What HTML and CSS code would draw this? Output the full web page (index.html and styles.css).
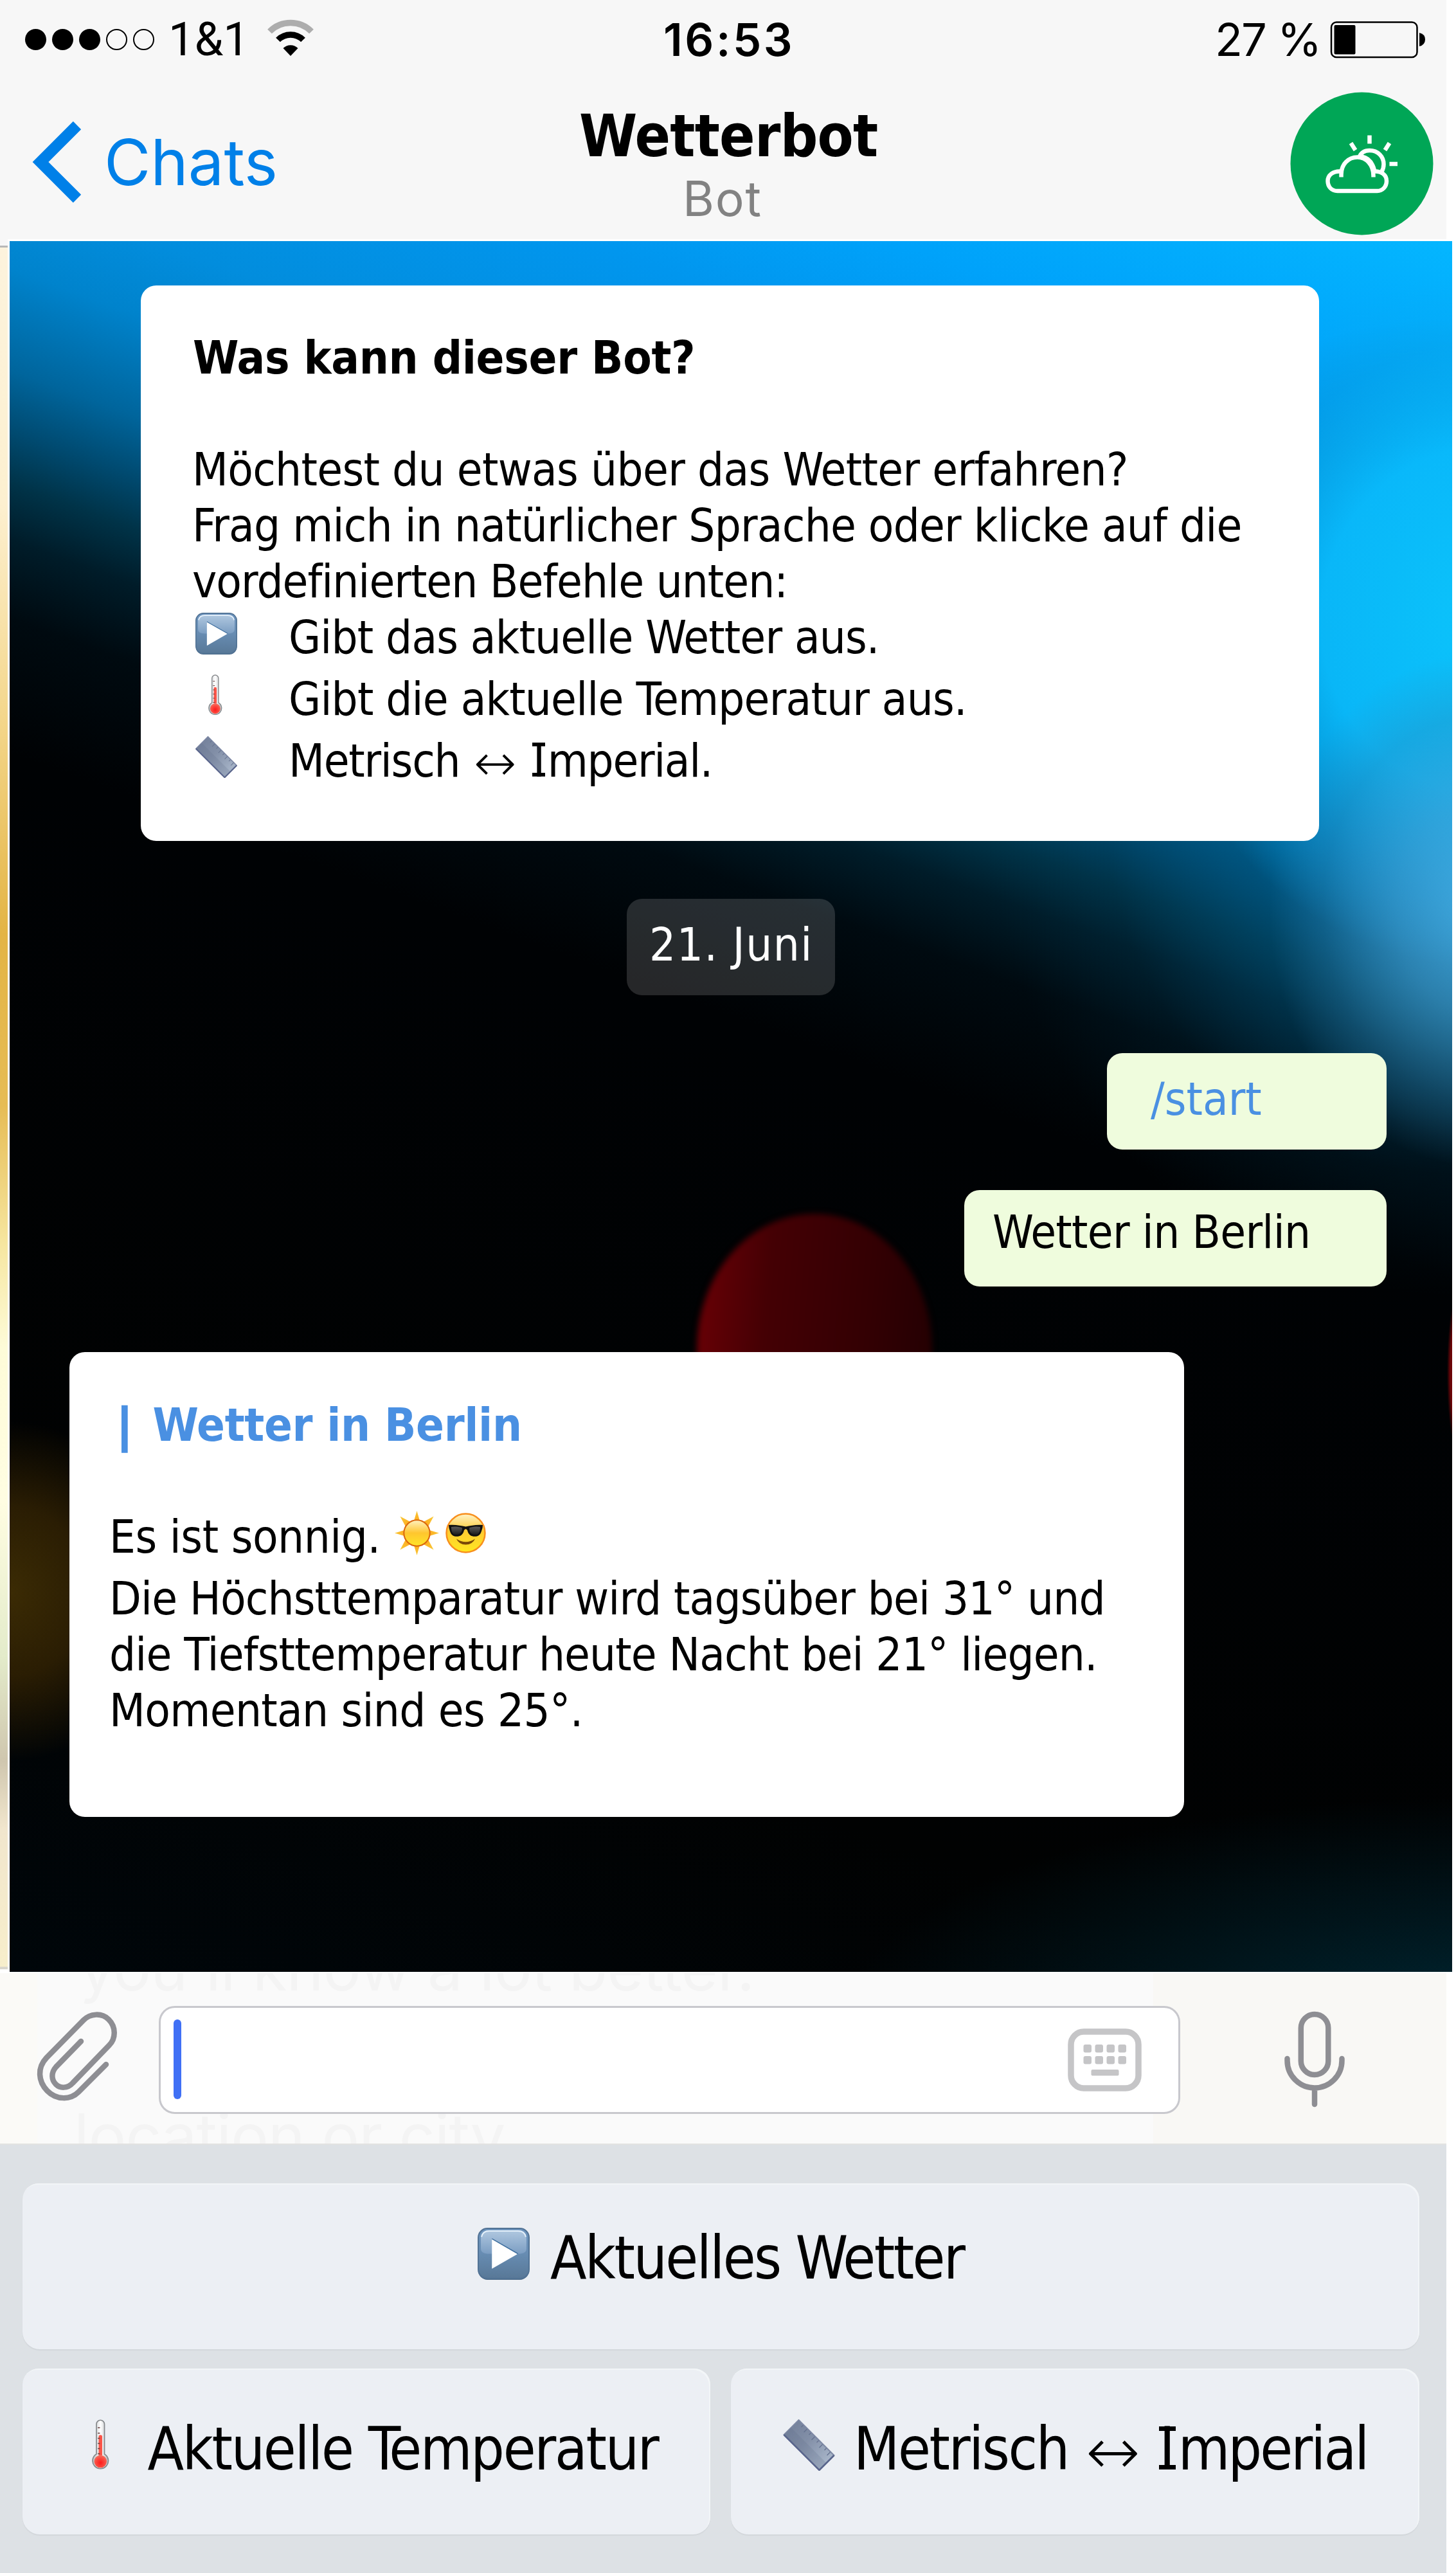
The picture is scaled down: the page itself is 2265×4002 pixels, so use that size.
FILE: index.html
```html
<!DOCTYPE html>
<html lang="de">
<head>
<meta charset="utf-8">
<title>Wetterbot</title>
<link rel="stylesheet" href="styles.css">
</head>
<body>
<svg class="sprite" width="0" height="0" aria-hidden="true">
  <defs>
    <linearGradient id="playBody" x1="0" y1="0" x2="0" y2="1"><stop offset="0" stop-color="#6f96bf"/><stop offset=".5" stop-color="#678cb2"/><stop offset="1" stop-color="#587897"/></linearGradient>
    <linearGradient id="playGloss" x1="0" y1="0" x2="0" y2="1"><stop offset="0" stop-color="#b0c8e0"/><stop offset="1" stop-color="#7b9dc2"/></linearGradient>
    <linearGradient id="rulerBody" x1="0" y1="0" x2="1" y2="1"><stop offset="0" stop-color="#6f7c97"/><stop offset=".45" stop-color="#8390a8"/><stop offset="1" stop-color="#b4c2d4"/></linearGradient>
    <linearGradient id="tube" x1="0" y1="0" x2="1" y2="0"><stop offset="0" stop-color="#b9bdc0"/><stop offset=".5" stop-color="#ffffff"/><stop offset="1" stop-color="#b5b9bc"/></linearGradient>
    <radialGradient id="bulb" cx=".5" cy=".6" r=".6"><stop offset="0" stop-color="#ff1a1a"/><stop offset=".6" stop-color="#fb4a40"/><stop offset="1" stop-color="#f4705f"/></radialGradient>
    <linearGradient id="sunBody" x1="0" y1="0" x2="0" y2="1"><stop offset="0" stop-color="#fff1c0"/><stop offset=".5" stop-color="#ffc62e"/><stop offset="1" stop-color="#ffe528"/></linearGradient>
    <radialGradient id="ray" gradientUnits="userSpaceOnUse" cx="35" cy="35" r="35"><stop offset=".5" stop-color="#ffa91c"/><stop offset="1" stop-color="#f8c838"/></radialGradient>
    <linearGradient id="faceBody" x1="0" y1="0" x2="0" y2="1"><stop offset="0" stop-color="#fff3c8"/><stop offset=".45" stop-color="#ffcb33"/><stop offset="1" stop-color="#ffe81f"/></linearGradient>
    <linearGradient id="lens" x1="0" y1="0" x2="0" y2="1"><stop offset="0" stop-color="#5a5a5a"/><stop offset="1" stop-color="#1c1c1c"/></linearGradient>
    <symbol id="play" viewBox="0 0 80 81">
      <rect x="1" y="2" width="78" height="78" rx="14" fill="#4a6987"/>
      <rect x="1" y="1" width="78" height="77" rx="14" fill="url(#playBody)" stroke="#527395" stroke-width="2"/>
      <path d="M5 17Q5 4 18 4H62Q75 4 75 17V32Q75 40 62 40H18Q5 40 5 32Z" fill="url(#playGloss)"/>
      <path d="M6 14Q8 5 18 5H62Q72 5 74 14" fill="none" stroke="#e6f1fb" stroke-width="2"/>
      <path d="M22 17L62 40L22 63Z" fill="#fff"/>
      <path d="M22 17L62 40" stroke="#3f6f9f" stroke-width="1.5"/>
    </symbol>
    <symbol id="thermo" viewBox="0 0 27 80">
      <path d="M7 54V7.5A6.2 6.2 0 0 1 19.500 7.500V54A12.200 12.200 0 1 1 7 54Z" fill="url(#tube)" stroke="#85888b" stroke-width="1.700"/>
      <path d="M10.500 56V27A2.700 2.700 0 0 1 16 27V56Z" fill="#fb5448"/>
      <circle cx="13.300" cy="65.500" r="9.800" fill="url(#bulb)"/>
      <path d="M9 13H12.500M9 21.500H12.500M9 29.500H12.500M9 37.500H12.500M9 45.500H12.500M9 53.500H12.500" stroke="#6b4444" stroke-width="1.300"/>
    </symbol>
    <symbol id="ruler" viewBox="0 0 80 80">
      <path d="M24 1L79 56L56 79L1 24Z" fill="url(#rulerBody)" stroke="#7d88a4" stroke-width="2"/>
      <path d="M12 13L67 68L56 79L1 24Z" fill="#5f6d8a" opacity=".22"/>
      <path d="M1 24L56 79L79 56" fill="none" stroke="#59658c" stroke-width="2.500"/>
      <path d="M31 9L28 12M37 15L32 20M43 21L40 24M49 27L44 32M55 33L52 36M61 39L56 44M67 45L64 48M73 51L68 56" stroke="#66728f" stroke-width="1.300"/>
    </symbol>
    <symbol id="sun" viewBox="0 0 70 70">
      <path d="M35 0L40 17H30ZM35 70L40 53H30ZM0 35L17 30V40ZM70 35L53 30V40ZM8.500 8.500L26 18L18 26ZM61.500 8.500L52 26L44 18ZM8.500 61.500L18 44L26 52ZM61.500 61.500L44 52L52 44Z" fill="url(#ray)"/>
      <circle cx="35" cy="35" r="20.500" fill="url(#sunBody)" stroke="#d9650c" stroke-width="2"/>
    </symbol>
    <symbol id="cool" viewBox="0 0 63 63">
      <circle cx="31.500" cy="31.500" r="30" fill="url(#faceBody)" stroke="#f88f1d" stroke-width="2.500"/>
      <path d="M5 19C15 18 24 20 31.500 21.500C39 20 48 18 58 19L57.500 24C56.500 25 56 35 49 36.500C42 37.500 36 36 34 27Q31.500 23.500 29 27C27 36 21 37.500 14 36.500C7 35 6.500 25 5.500 24Z" fill="#111"/>
      <path d="M9 22C16 20.500 23 22 26 23.500C26 31 22 34.500 15 34C10.500 33 9 28 9 22ZM54 22C47 20.500 40 22 37 23.500C37 31 41 34.500 48 34C52.500 33 54 28 54 22Z" fill="url(#lens)"/>
      <path d="M17 40.500Q31.500 50 46 40.500Q42 49.500 31.500 49.500Q21 49.500 17 40.500Z" fill="#7a4a08"/>
    </symbol>
  </defs>
</svg>

<div class="screen">
  <header class="header">
    <div class="status">
      <svg class="dots" width="206" height="40" viewBox="36 41 206 40">
        <g fill="#000"><circle cx="55.500" cy="61.500" r="16.500"/><circle cx="97.500" cy="61.500" r="16.500"/><circle cx="139.500" cy="61.500" r="16.500"/></g>
        <g fill="none" stroke="#000" stroke-width="2"><circle cx="181.500" cy="61.500" r="15.500"/><circle cx="223.500" cy="61.500" r="15.500"/></g>
      </svg>
      <span class="carrier">1&amp;1</span>
      <svg class="wifi" width="74" height="56" viewBox="415 32 74 56">
        <path d="M452 87L440.500 75A16.500 16.500 0 0 1 463.500 75Z" fill="#000"/>
        <path d="M432.500 62A27.500 27.500 0 0 1 471.500 62" fill="none" stroke="#000" stroke-width="9.500"/>
        <path d="M419.500 49A46 46 0 0 1 484.500 49" fill="none" stroke="#adadad" stroke-width="9.500"/>
      </svg>
      <span class="clock">16:53</span>
      <span class="percent">27 %</span>
      <svg class="battery" width="150" height="58" viewBox="2069 33 150 58">
        <rect x="2071" y="34.500" width="133.500" height="54.500" rx="8" fill="none" stroke="#000" stroke-width="2.500"/>
        <rect x="2075.500" y="39" width="33" height="45.500" rx="2" fill="#000"/>
        <path d="M2208 51Q2217 53 2217 61.500Q2217 70 2208 72Z" fill="#000"/>
      </svg>
    </div>
    <div class="nav">
      <a class="back">
        <svg width="78" height="128" viewBox="49 188 78 128"><path d="M120 195L63 252L120 309" fill="none" stroke="#0080e8" stroke-width="17.500"/></svg>
        <span class="back-label">Chats</span>
      </a>
      <div class="title">
        <div class="title-name">Wetterbot</div>
        <div class="title-sub">Bot</div>
      </div>
      <svg class="avatar" width="223" height="223" viewBox="2006.500 143.500 223 223">
        <circle cx="2118" cy="255" r="111" fill="#00a656"/>
        <g fill="none" stroke="#fff" stroke-width="6.500">
          <path d="M2086 276V272C2086 256 2097 245 2111 245C2125 245 2136 257 2136 274V276"/>
          <path d="M2086 267C2073 266 2065 273 2065 282C2065 291 2071 297.500 2080 297.500H2142C2150 297.500 2156.500 291 2156.500 282C2156.500 273 2149 266 2136 267"/>
          <path d="M2114 245C2117 237 2123 234.500 2130 234.500C2143 234.500 2152 244 2152 256C2152 260 2151 264 2149 267M2118 244C2129 246 2135 254 2138 267"/>
          <path d="M2130 211V224M2101 223L2108 234M2161 223L2154 234M2161 255.500H2173.500"/>
        </g>
      </svg>
    </div>
  </header>

  <main class="chat-row">
    <div class="edge"></div>
    <section class="chat">
      <div class="glow glow-red"></div>
      <div class="card intro">
        <div class="line bold ls-was">Was kann dieser Bot?</div>
        <div class="line blank"></div>
        <div class="line ls-moe">Möchtest du etwas über das Wetter erfahren?</div>
        <div class="line ls-frag">Frag mich in natürlicher Sprache oder klicke auf die</div>
        <div class="line ls-vor">vordefinierten Befehle unten:</div>
        <div class="line cmd"><svg class="i-play"><use href="#play"/></svg><span class="ls-gibt">Gibt das aktuelle Wetter aus.</span></div>
        <div class="line cmd tall"><svg class="i-thermo"><use href="#thermo"/></svg><span class="ls-temp">Gibt die aktuelle Temperatur aus.</span></div>
        <div class="line cmd tall"><svg class="i-ruler"><use href="#ruler"/></svg><span class="word">Metrisch</span><span class="arrow">↔</span><span class="word2"><span class="cap-i">I</span>mperial.</span></div>
      </div>
      <div class="date">21. Juni</div>
      <div class="bubble start">/start</div>
      <div class="bubble ask">Wetter in Berlin</div>
      <div class="card answer">
        <div class="line bold heading"><span class="bar">|</span><span>Wetter in Berlin</span></div>
        <div class="line blank"></div>
        <div class="line sunny"><span class="sunny-text">Es ist sonnig.</span><svg class="i-sun"><use href="#sun"/></svg><svg class="i-cool"><use href="#cool"/></svg></div>
        <div class="line ls-hoch">Die Höchsttemparatur wird tagsüber bei 31° und</div>
        <div class="line ls-tief">die Tiefsttemperatur heute Nacht bei 21° liegen.</div>
        <div class="line ls-mom">Momentan sind es 25°.</div>
      </div>
    </section>
  </main>

  <div class="composer">
    <div class="ghost ghost-top">you'll know a lot better.</div>
    <div class="ghost ghost-bottom">location or city</div>
    <svg class="clip" width="126" height="140" viewBox="56 3129 126 140">
      <path d="M165 3211L122 3254C110 3266 88 3267 73.500 3252C59 3237 58 3216 72 3201L130 3142C140 3132 158 3130 169 3141C181 3153 180 3171 170 3181L113 3240C105 3249 93 3248 87 3242C80 3235 79 3224 87 3215L126 3175" fill="none" stroke="#8e8e93" stroke-width="8.500" stroke-linecap="round"/>
    </svg>
    <div class="field">
      <div class="caret"></div>
      <svg class="keys" width="115" height="98" viewBox="1661.500 3155 115 98">
        <rect x="1666.500" y="3160" width="105" height="88" rx="20" fill="none" stroke="#c5c5c7" stroke-width="9.500"/>
        <g fill="#c5c5c7">
          <rect x="1686" y="3180" width="12.500" height="12.500" rx="3"/><rect x="1704" y="3180" width="12.500" height="12.500" rx="3"/><rect x="1722" y="3180" width="12.500" height="12.500" rx="3"/><rect x="1740" y="3180" width="12.500" height="12.500" rx="3"/>
          <rect x="1686" y="3198" width="12.500" height="12.500" rx="3"/><rect x="1704" y="3198" width="12.500" height="12.500" rx="3"/><rect x="1722" y="3198" width="12.500" height="12.500" rx="3"/><rect x="1740" y="3198" width="12.500" height="12.500" rx="3"/>
          <rect x="1698" y="3219" width="43" height="9.500" rx="2"/>
        </g>
      </svg>
    </div>
    <svg class="mic" width="96" height="150" viewBox="1996.500 3128 96 150">
      <g fill="none" stroke="#8e8e93" stroke-width="8.500" stroke-linecap="round">
        <rect x="2023.300" y="3133" width="42.500" height="94" rx="21.200"/>
        <path d="M2002 3202V3205A42.500 42.500 0 0 0 2087 3205V3202M2044.500 3248V3273"/>
      </g>
    </svg>
  </div>

  <div class="keyboard">
    <div class="key key-now"><svg class="k-play"><use href="#play"/></svg><span>Aktuelles Wetter</span></div>
    <div class="key-row">
      <div class="key key-temp"><svg class="k-thermo"><use href="#thermo"/></svg><span>Aktuelle Temperatur</span></div>
      <div class="key key-unit"><svg class="k-ruler"><use href="#ruler"/></svg><span class="k-word">Metrisch</span><span class="arrow">↔</span><span class="k-word2"><span class="cap-i">I</span>mperial</span></div>
    </div>
  </div>
</div>
</body>
</html>
```
FILE: styles.css
```css
* { box-sizing: border-box; }
body { margin: 0; background: #fff; font-family: "DejaVu Sans Condensed", "DejaVu Sans", sans-serif; color: #000; }
.sprite { position: absolute; }
svg { display: block; flex: none; overflow: visible; }
.screen { width: 2265px; height: 4002px; display: flex; flex-direction: column; overflow: hidden; white-space: nowrap; }

/* header */
.header { width: 2250px; height: 372px; background: #f7f7f7; padding-top: 17.6px; font-family: Inter, "Liberation Sans", sans-serif; }
.status { display: grid; grid-template-columns: 262px 153px 617px 858px 179px 181px; height: 88px; line-height: 88px; font-size: 70.5px; }
.dots { margin: 23.4px 0 0 36px; }
.carrier { font-family: Roboto, sans-serif; font-size: 72px; }
.wifi { margin-top: 14.4px; }
.clock { font-weight: 600; letter-spacing: 3.5px; }
.percent { letter-spacing: -1.9px; }
.battery { margin-top: 15.4px; }
.nav { display: grid; grid-template-columns: 901px 1105.500px 244px; }
.back { display: flex; padding-left: 49px; color: #0080e8; }
.back svg { margin-top: 82.4px; }
.back-label { margin: 86.4px 0 0 35px; font-size: 99px; line-height: 120px; }
.title { width: 470px; padding-top: 54px; }
.title-name { font: bold 91px/104px "DejaVu Sans Condensed", sans-serif; letter-spacing: -.7px; }
.title-sub { padding-left: 161px; font-size: 75px; line-height: 90px; letter-spacing: 1.7px; color: #828282; }
.avatar { margin-top: 37.9px; }

/* conversation */
.chat-row { display: flex; height: 2697px; }
.edge { width: 12px; height: 2691px; margin-right: 3px; border-top: 10px solid #f7f7f7; border-bottom: 4px solid #d9d6cc; background: linear-gradient(#b8b8b8 0 3px, transparent 3px), linear-gradient(#fdf3dd 0, #fdf0d0 15%, #f3d588 28%, #e3b445 40%, #e6bc55 50%, #f6e6a0 58%, #fdfbd8 64%, #fffde2 73%, #e3ebca 82%, #cfc6ae 88%, #f1e6cd 92%, #f7eecb 100%); }
.chat {
  position: relative; overflow: hidden; width: 2244px; height: 2692px; margin-top: 3px; padding-top: 69px;
  display: flex; flex-direction: column; align-items: flex-start; font-size: 72px; line-height: 87px;
  background:
    radial-gradient(ellipse 16px 120px at 2252px 1760px, #6b0508 0 70%, transparent 100%),
    radial-gradient(ellipse 300px 330px at 0px 2100px, #3b2b04 0, #2a1d03 40%, transparent 80%),
    radial-gradient(ellipse 1000px 340px at 2300px 2760px, rgba(0,44,58,.85), rgba(0,30,40,0) 100%),
    radial-gradient(ellipse 330px 400px at 2290px 1040px, rgba(80,178,230,.8) 0, rgba(70,160,210,.62) 40%, rgba(50,130,175,.3) 75%, rgba(40,110,150,0) 100%),
    radial-gradient(ellipse 520px 540px at 2300px 590px, rgba(12,200,255,.95) 0, rgba(10,190,255,.9) 50%, rgba(8,170,240,.4) 80%, rgba(8,160,230,0) 100%),
    radial-gradient(ellipse 720px 760px at 2244px 880px, rgba(0,120,185,.8), rgba(0,84,125,.5) 45%, rgba(0,50,74,.2) 75%, rgba(0,40,60,0) 100%),
    linear-gradient(200deg, #04b6ff 0, #00a2fa 9%, #0196ee 14%, #028ddd 21%, #0083cc 24.500%, #00659c 29%, #004a70 31.700%, #003348 34%, #001c29 36.500%, #000a10 40%, #000204 46%, #010202 80%, #00060a 100%);
}
.glow { position: absolute; }
.glow-red { left: 1069px; top: 1513px; width: 366px; height: 420px; border-radius: 50%; background: linear-gradient(95deg, #6c0006 0, #440004 30%, #330003 70%, #220002 100%); filter: blur(5px); }
.card { position: relative; background: #fff; border-radius: 24px; }
.intro { width: 1833px; height: 864px; margin-left: 204px; padding: 69px 0 0 80px; }
.line { height: 87px; }
.bold { font-weight: bold; }
.ls-was { padding-left: 1px; letter-spacing: -.29px; }
.ls-moe { letter-spacing: -.67px; }
.ls-frag { letter-spacing: -.77px; }
.ls-vor { letter-spacing: -.97px; }
.ls-gibt { letter-spacing: -.84px; }
.ls-temp { letter-spacing: -.8px; }
.cmd { display: flex; }
.cmd.tall { height: 96px; padding-top: 9px; }
.i-play { width: 65px; height: 66px; margin: 5px 80px 0 5px; }
.i-thermo { width: 22px; height: 65px; margin: 5px 103px 0 25px; }
.i-ruler { width: 65px; height: 65px; margin: 5px 80px 0 5px; }
.word { width: 288px; letter-spacing: -1.23px; }
.arrow { font-family: "DejaVu Sans Light", "DejaVu Sans", sans-serif; font-weight: 200; font-size: 1.1em; margin-top: .035em; }
.cmd .arrow { width: 88px; }
.word2 { letter-spacing: -1.35px; }
.cap-i { display: inline-block; width: .373em; line-height: 1em; text-align: center; letter-spacing: 0; background: linear-gradient(#000,#000) center .117em / .283em .08em no-repeat, linear-gradient(#000,#000) center .766em / .283em .08em no-repeat; }
.date { position: relative; width: 324px; height: 150px; margin: 90px 0 0 960px; padding: 27.6px 0 0 35px; border-radius: 24px; background: rgba(255,255,255,.15); color: #fff; letter-spacing: 1.5px; }
.bubble { position: relative; height: 150px; margin-left: auto; margin-right: 102px; border-radius: 24px; background: #effcdd; }
.start { width: 435px; margin-top: 90px; padding: 27.6px 0 0 68px; color: #4a90e2; }
.ask { width: 657px; margin-top: 63px; padding: 21.6px 0 0 44px; letter-spacing: -.67px; }
.answer { width: 1734px; height: 723px; margin: 101.500px 0 0 93px; padding: 70px 0 0 62px; }
.heading { display: flex; padding-left: 12px; color: #4a90e2; letter-spacing: -.35px; }
.bar { width: 55.500px; -webkit-text-stroke: 2.500px #4a90e2; }
.sunny { display: flex; height: 96px; }
.sunny-text { width: 444px; letter-spacing: -.47px; }
.i-sun { width: 69px; height: 69px; margin: 3px 9.500px 0 0; }
.i-cool { width: 63px; height: 63px; margin-top: 6px; }
.ls-hoch { letter-spacing: -.83px; }
.ls-tief { letter-spacing: -.86px; }
.ls-mom { letter-spacing: -.65px; }

/* composer */
.composer { position: relative; width: 2250px; height: 267px; display: flex; overflow: hidden; border-bottom: 2px solid #e2e2e1; background: linear-gradient(90deg, #fbfaf7 0 58px, #fafafa 58px 1794px, #f9f8f5 1794px 100%); }
.ghost { position: absolute; font: 98px/120px Inter, sans-serif; color: #f4f4f4; }
.ghost-top { left: 124px; top: -68px; letter-spacing: -.8px; }
.ghost-bottom { left: 115px; top: 194px; letter-spacing: -1px; }
.clip { position: relative; margin: 60px 64.500px 0 56px; }
.field { position: relative; width: 1589.500px; height: 168px; margin-top: 51px; border: 3px solid #c8c8cd; border-radius: 25px; background: #fff; display: flex; justify-content: space-between; padding: 18px 57px 0 20.500px; }
.caret { width: 12px; height: 124px; border-radius: 6px; background: #4070f5; }
.keys { margin-top: 14px; }
.mic { margin: 59px 0 0 160.500px; }

/* reply keyboard */
.keyboard { width: 2250px; height: 666px; padding: 59.700px 42px 0 35px; background: #dde1e5; font-size: 92px; line-height: 110px; }
.key { display: flex; height: 258px; border-radius: 25px 25px 27px 27px; background: #eceff4; box-shadow: inset -2px 2px 1px #f3f6f8, 0 2px 1px #d3d7db; }
.key-row { display: flex; gap: 32px; margin-top: 30px; }
.key-now { padding: 62px 0 0 708px; letter-spacing: -2.53px; }
.k-play { width: 81px; height: 82px; margin: 7px 32px 0 0; }
.key-temp { width: 1069.500px; padding: 71px 0 0 108px; letter-spacing: -2.27px; }
.k-thermo { width: 27px; height: 80px; margin: 8.500px 59.500px 0 0; }
.key-unit { flex: 1; padding: 71px 0 0 81px; }
.k-ruler { width: 81px; height: 80px; margin: 8px 29.500px 0 0; }
.k-word { width: 361px; letter-spacing: -2.39px; }
.key .arrow { width: 109.500px; }
.k-word2 { letter-spacing: -2.9px; }
```
